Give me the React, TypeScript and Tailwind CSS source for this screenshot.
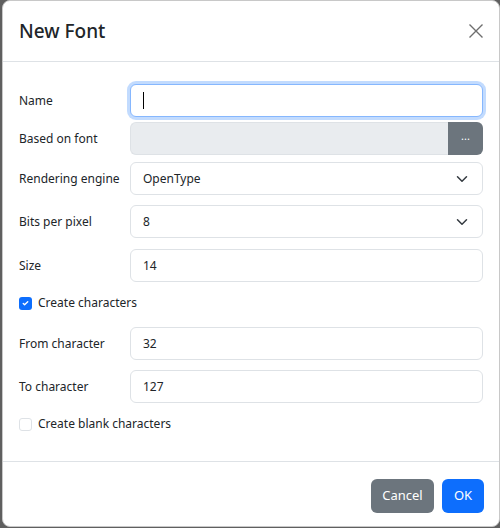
import React from "react";

const font = { fontFamily: '"Segoe UI", "Noto Sans", "Open Sans", sans-serif' };

function Label({ children }: { children: React.ReactNode }) {
  return <div className="w-[111px] shrink-0 text-[12px] text-[#212529]">{children}</div>;
}

function Chevron() {
  return (
    <svg width="16" height="12" viewBox="0 0 16 16" className="absolute right-[12px] top-1/2 -translate-y-1/2">
      <path d="m2 5 6 6 6-6" fill="none" stroke="#343a40" strokeWidth="2" strokeLinecap="round" strokeLinejoin="round" />
    </svg>
  );
}

function TextInput({ value }: { value: string }) {
  return (
    <div className="flex h-[33px] flex-1 items-center rounded-[6px] border border-[#dee2e6] bg-white px-[12px] text-[12px] text-[#212529]">
      {value}
    </div>
  );
}

function SelectInput({ value }: { value: string }) {
  return (
    <div className="relative flex h-[33px] flex-1 items-center rounded-[6px] border border-[#dee2e6] bg-white px-[12px] text-[12px] text-[#212529]">
      {value}
      <Chevron />
    </div>
  );
}

export default function App() {
  return (
    <div className="h-[528px] w-[500px] overflow-hidden bg-[#5f5f5f]" style={font}>
      <div className="ml-[2px] flex h-[527px] w-[498px] flex-col rounded-[8px] border border-[#c8c8c8] bg-white">
        {/* Header */}
        <div className="flex h-[61px] items-center justify-between border-b border-[#dee2e6] pl-[16px] pr-[14px]">
          <div className="text-[19px] font-medium text-[#212529]">New Font</div>
          <svg width="16" height="16" viewBox="0 0 16 16" className="mr-[1px]">
            <path d="M1.5 1.5 14.5 14.5M14.5 1.5 1.5 14.5" stroke="#6e6e6e" strokeWidth="1.4" />
          </svg>
        </div>

        {/* Body */}
        <div className="flex flex-1 flex-col px-[16px] pt-[22px]">
          <div className="flex items-center">
            <Label>Name</Label>
            <div className="flex h-[33px] flex-1 items-center rounded-[6px] border border-[#86b7fe] bg-white px-[12px] shadow-[0_0_0_3px_rgba(13,110,253,0.25)]">
              <span className="inline-block h-[17px] w-[1px] bg-black" />
            </div>
          </div>

          <div className="mt-[5px] flex items-center">
            <Label>Based on font</Label>
            <div className="flex h-[33px] flex-1">
              <div className="flex-1 rounded-l-[6px] border border-r-0 border-[#dee2e6] bg-[#e9ecef]" />
              <div className="flex w-[35px] items-center justify-center rounded-r-[6px] bg-[#6c757d] pb-[4px] text-[11px] text-white">...</div>
            </div>
          </div>

          <div className="mt-[7px] flex items-center">
            <Label>Rendering engine</Label>
            <SelectInput value="OpenType" />
          </div>

          <div className="mt-[10px] flex items-center">
            <Label>Bits per pixel</Label>
            <SelectInput value="8" />
          </div>

          <div className="mt-[11px] flex items-center">
            <Label>Size</Label>
            <TextInput value="14" />
          </div>

          <div className="mt-[11px] flex h-[20px] items-center">
            <div className="flex h-[13px] w-[13px] items-center justify-center rounded-[3px] bg-[#0d6efd]">
              <svg width="9" height="9" viewBox="0 0 20 20">
                <path d="m5 10 3 3 7-7" fill="none" stroke="#fff" strokeWidth="3" strokeLinecap="round" strokeLinejoin="round" />
              </svg>
            </div>
            <span className="ml-[6px] text-[12px] text-[#212529]">Create characters</span>
          </div>

          <div className="mt-[14px] flex items-center">
            <Label>From character</Label>
            <TextInput value="32" />
          </div>

          <div className="mt-[10px] flex items-center">
            <Label>To character</Label>
            <TextInput value="127" />
          </div>

          <div className="mt-[11px] flex h-[20px] items-center">
            <div className="h-[13px] w-[13px] rounded-[3px] border border-[#dee2e6] bg-white" />
            <span className="ml-[6px] text-[12px] text-[#212529]">Create blank characters</span>
          </div>
        </div>

        {/* Footer */}
        <div className="flex h-[65px] items-start justify-end gap-[8px] border-t border-[#dee2e6] px-[15px] pt-[17px]">
          <button className="h-[34px] w-[63px] rounded-[6px] bg-[#6c757d] text-[13px] text-white">Cancel</button>
          <button className="h-[34px] w-[42px] rounded-[6px] bg-[#0d6efd] text-[13px] text-white">OK</button>
        </div>
      </div>
    </div>
  );
}
